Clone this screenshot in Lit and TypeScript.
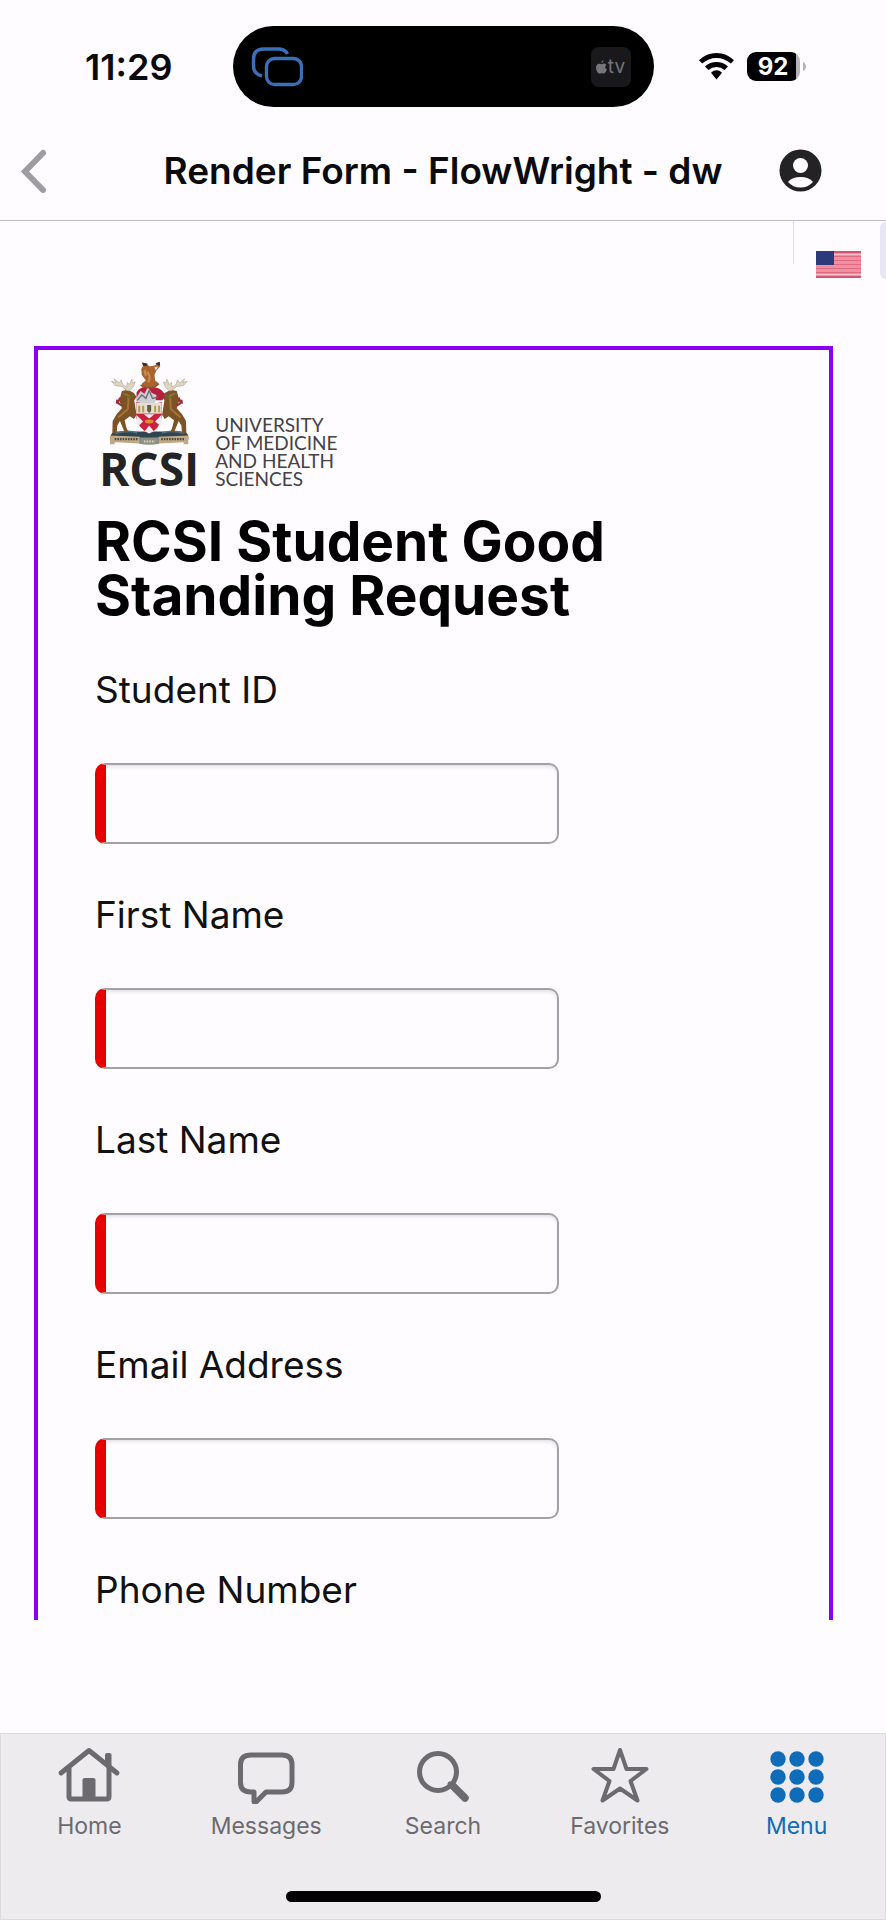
import { LitElement, html, css, svg } from "lit";
import { customElement, property } from "lit/decorators.js";
import { classMap } from "lit/directives/class-map.js";

const crest = svg`
  <path d="M70 262 Q70 246 92 246 H280 Q304 246 304 262 V270 H70Z" fill="#2e4450"/>
  <path d="M84 252 Q120 240 150 250 M225 250 Q262 240 290 252" fill="none" stroke="#56707a" stroke-width="5"/>
  <path d="M68 258 L158 262 V282 L82 278 V284 H68Z M304 258 L214 262 V282 L290 278 V284 H304Z" fill="#bfa987"/>
  <path d="M156 264 H216 V283 Q186 289 156 283Z" fill="#8b9086"/>
  <path d="M82 269 H152 M222 269 H294" stroke="#574a39" stroke-width="7" stroke-dasharray="5 3"/>
  <path d="M170 276 H203" stroke="#e0d2b4" stroke-width="6" stroke-dasharray="5 3"/>
  <g id="stag">
    <path d="M104 124 L122 120 L140 130 L148 142 L141 152 L148 196 L140 208 L128 200 L112 212 L118 236 L124 248 H112 L98 214 L90 228 L88 252 H75 L76 214 L88 194 L104 176 L96 152Z" fill="#7d5225"/>
    <path d="M108 132 L124 138 L122 178 L104 194 L92 204" fill="none" stroke="#a57436" stroke-width="6"/>
    <path d="M98 144 L92 160 L104 168 M90 150 L88 162" fill="none" stroke="#a52a40" stroke-width="6"/>
    <path d="M106 132 L126 144 L142 136" fill="none" stroke="#5f7136" stroke-width="4"/>
    <path d="M118 122 L104 110 L84 108 L72 94 L86 99 L80 87 L96 99 L102 90 L106 104 L118 112 L120 98 L126 104 L134 88 L136 100 L144 96 L138 112 L126 124Z" fill="#ddd6c0" stroke="#9c9582" stroke-width="1.500"/>
  </g>
  <use href="#stag" transform="translate(373 0) scale(-1 1)"/>
  <path d="M148 128 Q160 108 186 112 Q218 108 234 134 L226 152 H148Z" fill="#b3213c"/>
  <path d="M144 150 L160 124 L172 132 L182 112 L194 130 L208 136 L204 160 H150Z" fill="#cfced2"/>
  <path d="M150 152 L164 136 L176 146 L186 122 L196 146 L212 142" fill="none" stroke="#6d6c73" stroke-width="4"/>
  <path d="M146 158 Q186 166 225 158 L224 206 Q216 240 186 252 Q154 238 147 206Z" fill="#cc203f"/>
  <path d="M147 160 H224 V192 H147Z" fill="#e3dfd2"/>
  <path d="M156 168 V188 M168 168 V188 M204 168 V188 M216 168 V188" stroke="#b59a4d" stroke-width="6"/>
  <path d="M180 166 H192 V184 L186 190 L180 184Z" fill="#5c6140"/>
  <path d="M148 196 L168 216 L150 232 L147 212Z M223 196 L204 216 L221 230 L225 212Z M170 194 H202 L186 207Z M172 245 L186 228 L200 245 L186 252Z" fill="#f3ecee"/>
  <ellipse cx="186" cy="216" rx="13" ry="6" fill="#e08b36"/>
  <path d="M168 114 Q158 104 168 98 L176 92 L164 76 L162 58 L168 48 L165 38 L178 42 L188 50 L204 46 L218 36 L219 50 L208 62 L202 76 L204 92 L214 100 Q214 108 202 112Z" fill="#a9632f"/>
  <path d="M180 66 Q192 78 184 98 M172 60 L176 78" fill="none" stroke="#c98a52" stroke-width="7"/>
  <path d="M165 38 L182 42 L176 49 L167 48Z M205 40 L218 36 L219 47 L211 46Z" fill="#3d302c"/>
  <path d="M202 52 L213 50 L206 62Z" fill="#efe6e0"/>
  <path d="M160 106 L178 114 L202 112 L216 102" fill="none" stroke="#86572c" stroke-width="4"/>
`;

const tabIcons: Record<string, unknown> = {
  Home: svg`<g fill="none" stroke="currentColor" stroke-width="5" stroke-linecap="round" stroke-linejoin="round">
      <path d="M4 27 L32 4.500 L60 27"/><path d="M12 22 V50.500 Q12 53 14.500 53 H49.500 Q52 53 52 50.500 V22"/></g>
      <path d="M48 19 V9 Q48 7 50 7 H52.500 Q54.500 7 54.500 9 V24Z" fill="currentColor"/>
      <path d="M25.500 54 V34 Q25.500 32 27.500 32 H36.500 Q38.500 32 38.500 34 V54Z" fill="currentColor"/>`,
  Messages: svg`<path d="M17 9 H48 Q58 9 58 18.500 V36.500 Q58 46 48 46 H32 L22 56 Q20 57 20 55 V46 H17 Q6.500 46 6.500 36.500 V18.500 Q6.500 9 17 9Z" fill="none" stroke="currentColor" stroke-width="5" stroke-linejoin="round"/>`,
  Search: svg`<g fill="none" stroke="currentColor" stroke-linecap="round"><circle cx="27" cy="26" r="18.500" stroke-width="5"/><path d="M43 41 L54 52" stroke-width="7.500"/><path d="M39 38 L44 43" stroke-width="5"/></g>`,
  Favorites: svg`<path d="M32 4 L38.500 23 H58.500 L42.500 35 L49.500 54.500 L32 42.500 L14.500 54.500 L21.500 35 L5.500 23 H25.500Z" fill="none" stroke="currentColor" stroke-width="4" stroke-linejoin="round"/>`,
  Menu: svg`<g fill="currentColor">${[13, 32, 51].map((x) =>
    [13, 31, 49].map((y) => svg`<circle cx=${x} cy=${y} r="7.700"/>`)
  )}</g>`,
};

@customElement("status-bar")
export class StatusBar extends LitElement {
  static styles = css`
    :host { display: grid; grid-template-columns: 1fr 421px 1fr; align-items: center; height: 133px; }
    .time { text-align: center; padding-left: 25px; font-size: 36px; font-weight: 600; line-height: 44px; }
    .island { display: flex; align-items: center; justify-content: space-between; box-sizing: border-box; height: 81px; padding: 0 23px 0 18px; border-radius: 41px; background: #000; }
    .tv { display: flex; align-items: center; justify-content: center; gap: 1px; width: 40px; height: 40px; border-radius: 8px; background: #19181b; color: #77767a; font-size: 19px; line-height: 24px; }
    .right { display: flex; align-items: center; gap: 13px; padding-left: 45px; }
    .battery { display: flex; align-items: center; gap: 3px; }
    .level { width: 53px; height: 29px; border-radius: 9px; background: linear-gradient(90deg, #000 49px, #b6b4b8 49px); color: #fff; font-size: 24px; font-weight: 700; line-height: 29px; text-align: center; }
    svg { display: block; }
  `;
  render() {
    return html`
      <div class="time">11:29</div>
      <div class="island">
        <svg width="52" height="40" viewBox="0 0 52 40" fill="none" stroke="#3b70b9" stroke-width="3.400">
          <path d="M36.500 7 Q34 2 27 2 H13 Q2.500 2 2.500 12 V19 Q2.500 27 11 29"/>
          <rect x="15.500" y="11.500" width="35" height="26" rx="8"/>
        </svg>
        <div class="tv">
          <svg width="11" height="14" viewBox="0 0 11 14" fill="currentColor">
            <path d="M7.600 0 Q7.600 2.600 5.300 3.200 Q5.300 .8 7.600 0Z M5.500 4.200 Q8.800 2.600 10.400 5 Q7.800 7.200 10.900 9.600 Q9.300 13.800 7.300 13.600 Q5.600 12.800 4 13.600 Q1.800 13.900 .5 10.200 Q-1 5 2.500 3.800 Q4 3.500 5.500 4.200Z"/>
          </svg>
          <span>tv</span>
        </div>
      </div>
      <div class="right">
        <svg width="35" height="27" viewBox="0 0 35 27">
          <path d="M17.500 0 Q27.500 0 35 7.300 L31.800 10.600 Q25.600 4.900 17.500 4.900 Q9.400 4.900 3.200 10.600 L0 7.300 Q7.500 0 17.500 0Z M17.500 9 Q24 9 29 13.400 L25.500 17 Q22 14 17.500 14 Q13 14 9.500 17 L6 13.400 Q11 9 17.500 9Z M17.500 17.300 Q20.500 17.300 23 19.700 L17.500 26.500 L12 19.700 Q14.500 17.300 17.500 17.300Z"/>
        </svg>
        <div class="battery">
          <div class="level">92</div>
          <svg width="3" height="9" viewBox="0 0 3 9"><path d="M0 0 Q3 1.500 3 4.500 T0 9Z" fill="#b6b4b8"/></svg>
        </div>
      </div>
    `;
  }
}

@customElement("title-bar")
export class TitleBar extends LitElement {
  static styles = css`
    :host { display: grid; grid-template-columns: 130px 1fr 130px; align-items: center; height: 75px; padding-bottom: 12px; border-bottom: 1px solid #bfbdc1; }
    button { display: flex; padding: 0; border: 0; background: none; }
    .back { padding-left: 20px; }
    .account { padding-left: 23px; }
    h1 { margin: 0; font-size: 37px; font-weight: 600; line-height: 48px; text-align: center; white-space: nowrap; }
  `;
  render() {
    return html`
      <button class="back" aria-label="Back">
        <svg width="28" height="44" viewBox="0 0 28 44" fill="none" stroke="#9e9ca0" stroke-width="6" stroke-linecap="round" stroke-linejoin="miter"><path d="M23 4 L5 22.500 L23 41"/></svg>
      </button>
      <h1>Render Form - FlowWright - dw</h1>
      <button class="account" aria-label="Account">
        <svg width="43" height="43" viewBox="0 0 43 43"><circle cx="21.500" cy="21.500" r="21" fill="#232225"/><circle cx="21.500" cy="16.500" r="7.500" fill="#fefcff"/><path d="M9 33 Q13 28 21.500 28 T34 33 Q29 38.500 21.500 38.500 T9 33Z" fill="#fefcff"/></svg>
      </button>
    `;
  }
}

@customElement("form-field")
export class FormField extends LitElement {
  @property() label = "";
  static styles = css`
    :host { display: flex; flex-direction: column; gap: 46px; }
    label { font-size: 37px; line-height: 54px; color: #111; }
    input { box-sizing: border-box; width: 464px; max-width: 100%; height: 81px; padding: 0 20px; border: 2px solid #a3a1a5; border-left: 11px solid #e60000; border-radius: 10px; outline: 0; background: none; box-shadow: inset 0 3px 4px -2px #d8d6da; font: inherit; font-size: 32px; }
  `;
  render() {
    return html`<label for="value">${this.label}</label><input id="value" type="text" required />`;
  }
}

@customElement("request-form")
export class RequestForm extends LitElement {
  static styles = css`
    :host { display: block; overflow: hidden; }
    .tools { display: flex; justify-content: flex-end; align-items: flex-start; height: 125px; }
    .language { display: flex; padding: 30px 19px 0 22px; border: 0; background: none; }
    .divider { width: 1px; height: 43px; background: #dedce0; }
    .panel { width: 6px; height: 57px; margin-top: 1px; border-radius: 6px 0 0 6px; background: #e8e5f4; }
    form { margin: 0 53px 0 34px; padding: 12px 57px 60px; border: 4px solid #8a00f2; }
    .logo { display: flex; align-items: flex-end; gap: 16px; height: 128px; padding-left: 4px; }
    .mark { display: flex; flex-direction: column; align-items: center; gap: 1px; }
    .name { font-family: "Open Sans", sans-serif; font-size: 46px; font-weight: 700; line-height: 44px; color: #232225; }
    .full { padding-bottom: 2px; font-family: Lato, sans-serif; font-size: 19px; line-height: 18px; color: #434247; white-space: pre-line; }
    h2 { max-width: 560px; margin: 24px 0 41px; font-size: 55px; font-weight: 700; line-height: 54px; color: #000; }
    .fields { display: flex; flex-direction: column; gap: 44px; }
    svg { display: block; }
  `;
  render() {
    const fields = ["Student ID", "First Name", "Last Name", "Email Address", "Phone Number"];
    return html`
      <div class="tools">
        <div class="divider"></div>
        <button class="language" aria-label="Language: English (US)">
          <svg width="45" height="27" viewBox="0 0 45 27">
            <rect width="45" height="27" fill="#ef8fa0"/>
            <path d="M0 1 H45 M0 26 H45" stroke="#d2566f" stroke-width="2"/>
            <path d="M0 5.500 H45 M0 9.500 H45 M0 13.500 H45 M0 17.500 H45 M0 21.500 H45" stroke="#dc6a80" stroke-width="1.200"/>
            <path d="M0 3.500 H45 M0 23.700 H45" stroke="#f8bcc8" stroke-width="1.200"/>
            <rect width="18" height="14" fill="#2c3a7c"/>
          </svg>
        </button>
        <div class="panel"></div>
      </div>
      <form>
        <div class="logo">
          <div class="mark">
            <svg width="79" height="84" viewBox="68 34 238 252">${crest}</svg>
            <div class="name">RCSI</div>
          </div>
          <div class="full">UNIVERSITY\nOF MEDICINE\nAND HEALTH\nSCIENCES</div>
        </div>
        <h2>RCSI Student Good Standing Request</h2>
        <div class="fields">${fields.map((f) => html`<form-field .label=${f}></form-field>`)}</div>
      </form>
    `;
  }
}

@customElement("tab-bar")
export class TabBar extends LitElement {
  static styles = css`
    :host { display: block; box-sizing: border-box; height: 187px; padding-top: 12px; border: 1px solid #dddbde; background: #edebee; }
    nav { display: grid; grid-template-columns: repeat(5, 1fr); }
    a { display: flex; flex-direction: column; align-items: center; gap: 6px; color: #6c6a6e; font-size: 23px; line-height: 32px; text-decoration: none; }
    a.active { color: #0f6cb8; }
    .indicator { width: 315px; height: 11px; margin: 49px auto 0; border-radius: 6px; background: #000; }
    svg { display: block; }
  `;
  render() {
    return html`
      <nav>
        ${Object.keys(tabIcons).map(
          (name) => html`<a href="#" class=${classMap({ active: name === "Menu" })}>
            <svg width="64" height="58" viewBox="0 0 64 58">${tabIcons[name]}</svg>
            <span>${name}</span>
          </a>`
        )}
      </nav>
      <div class="indicator"></div>
    `;
  }
}

@customElement("app-root")
export class AppRoot extends LitElement {
  static styles = css`
    :host { display: flex; flex-direction: column; height: 100vh; background: #fefcff; color: #0b0a0c; font-family: Inter, "Liberation Sans", sans-serif; }
    status-bar, title-bar, tab-bar { flex: none; }
    request-form { flex: 1; min-height: 0; margin-bottom: 113px; }
  `;
  render() {
    return html`
      <status-bar></status-bar>
      <title-bar></title-bar>
      <request-form></request-form>
      <tab-bar></tab-bar>
    `;
  }
}
